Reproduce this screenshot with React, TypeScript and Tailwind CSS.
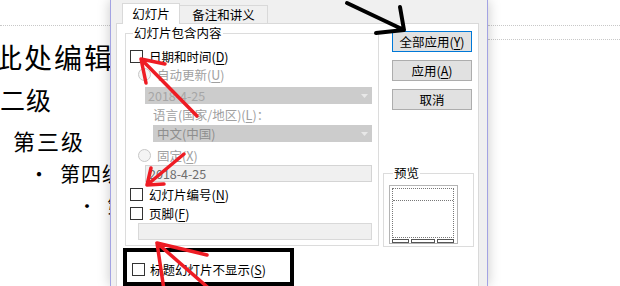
import React from 'react';

const Check = () => <span className="w-[13px] h-[13px] shrink-0 border border-[#333333] bg-white" />;
const Radio = () => <span className="w-[13px] h-[13px] shrink-0 rounded-full border border-[#c8c8c8] bg-[#f4f4f4]" />;

const Key = ({ k }: { k: string }) => (
  <span>
    (<span className="underline underline-offset-2">{k}</span>)
  </span>
);

const ComboArrow = () => (
  <svg width="7" height="4" viewBox="0 0 7 4" className="shrink-0">
    <path d="M0 0 L7 0 L3.5 4 Z" fill="#e8e8e8" />
  </svg>
);

const Annotations = () => (
  <svg className="absolute inset-0 z-20 pointer-events-none" width="620" height="286" viewBox="0 0 620 286">
    <g stroke="#ee1c24" strokeWidth="3.5" strokeLinecap="round" fill="none">
      <path d="M197 116 L141 59 M141 59 L146 83 M141 59 L165 64" />
      <path d="M184 154 L147 185 M147 185 L151 168 M147 185 L164 184" />
      <path d="M213 292 L157 243 M157 243 L164 290 M157 243 L207 255" />
    </g>
    <g stroke="#000" strokeWidth="4" strokeLinecap="round" fill="none">
      <path d="M347 3 L404 30 M404 30 L400 7 M404 30 L376 33" />
    </g>
  </svg>
);

const Dialog = () => (
  <div className="relative z-10 w-[378px] shrink-0 flex flex-col border-x border-[#a3a3e3] bg-[#f0f0f0] shadow-[0_0_12px_rgba(0,0,0,0.22)] text-[12.5px] leading-[14px]">
    {/* tab strip */}
    <div className="flex items-end pt-[3px] pl-[11px] -mb-px relative z-[1]">
      <div className="w-[58px] h-[21px] flex items-center justify-center bg-white border-x border-t border-[#d9d9d9]">幻灯片</div>
      <div className="w-[88px] h-[18px] mb-px flex items-center justify-center border-t border-r border-[#d9d9d9]">备注和讲义</div>
    </div>

    {/* tab panel */}
    <div className="ml-[5px] w-[363px] flex-1 flex items-start pl-[8px] bg-white border border-[#d9d9d9]">
      {/* left column */}
      <div className="w-[254px] shrink-0 flex flex-col">
        <fieldset className="mt-[2px] border border-[#dcdcdc] flex flex-col pb-[5px]">
          <legend className="ml-[7px] px-[1px] leading-[14px]">幻灯片包含内容</legend>

          <div className="mt-[10px] ml-[4px] h-[13px] flex items-center gap-[6px]">
            <Check />
            <span>日期和时间<Key k="D" /></span>
          </div>
          <div className="mt-[5px] ml-[12px] h-[13px] flex items-center gap-[6px] text-[#a0a0a0]">
            <Radio />
            <span>自动更新<Key k="U" /></span>
          </div>
          <div className="mt-[6px] ml-[19px] w-[227px] h-[17px] flex items-center justify-between pl-[3px] pr-[4px] bg-[#cccccc] text-[#a6a6a6]">
            <span>2018-4-25</span>
            <ComboArrow />
          </div>
          <div className="mt-[4px] ml-[27px] h-[14px] text-[#a0a0a0]">
            语言(国家/地区)<Key k="L" />：
          </div>
          <div className="mt-[3px] ml-[27px] w-[219px] h-[17px] flex items-center justify-between pl-[4px] pr-[4px] bg-[#cccccc] text-[#8e8e8e]">
            <span>中文(中国)</span>
            <ComboArrow />
          </div>
          <div className="mt-[7px] ml-[12px] h-[13px] flex items-center gap-[6px] text-[#a0a0a0]">
            <Radio />
            <span>固定<Key k="X" /></span>
          </div>
          <div className="mt-[3px] ml-[19px] w-[227px] h-[17px] flex items-center pl-[3px] bg-[#f0f0f0] border border-[#d4d4d4] text-[#6d6d6d]">
            2018-4-25
          </div>
          <div className="mt-[6px] ml-[4px] h-[13px] flex items-center gap-[6px]">
            <Check />
            <span>幻灯片编号<Key k="N" /></span>
          </div>
          <div className="mt-[6px] ml-[4px] h-[13px] flex items-center gap-[6px]">
            <Check />
            <span>页脚<Key k="F" /></span>
          </div>
          <div className="mt-[3px] ml-[12px] w-[234px] h-[17px] bg-[#f0f0f0] border border-[#d9d9d9]" />
        </fieldset>

        <div className="mt-[2px] -ml-[2px] w-[171px] h-[38px] border-[4px] border-black flex items-start pt-[11px] pl-[5px] gap-[5px]">
          <Check />
          <span className="leading-[13px]">标题幻灯片不显示<Key k="S" /></span>
        </div>
      </div>

      {/* right column */}
      <div className="ml-[4px] w-[91px] shrink-0 flex flex-col">
        <button className="mt-[7px] ml-[9px] w-[80px] h-[21px] flex items-center justify-center bg-[#e1e1e1] border border-[#0078d7]">
          全部应用<Key k="Y" />
        </button>
        <button className="mt-[8px] ml-[9px] w-[80px] h-[21px] flex items-center justify-center bg-[#e1e1e1] border border-[#adadad]">
          应用<Key k="A" />
        </button>
        <button className="mt-[8px] ml-[9px] w-[80px] h-[21px] flex items-center justify-center bg-[#e1e1e1] border border-[#adadad]">
          取消
        </button>

        <fieldset className="mt-[56px] border border-[#dcdcdc] pb-[2px]">
          <legend className="ml-[9px] px-[1px] leading-[14px]">预览</legend>
          <div className="mt-[5px] ml-[5px] w-[69px] flex flex-col pt-[2px] pl-[2px] bg-white border border-[#b4b4b4]">
            <div className="w-[62px] h-[50px] border border-dotted border-[#777777]">
              <div className="h-[12px] border-b border-dotted border-[#777777]" />
            </div>
            <div className="mt-px flex gap-[2px]">
              <span className="w-[17px] h-[4px] border border-[#555555]" />
              <span className="w-[24px] h-[4px] border border-[#555555]" />
              <span className="w-[17px] h-[4px] border border-[#555555]" />
            </div>
          </div>
        </fieldset>
      </div>
    </div>
  </div>
);

export default function App() {
  return (
    <div className="relative flex w-[620px] h-[286px] overflow-hidden bg-white text-black font-['Noto_Sans_CJK_SC',sans-serif]">
      {/* slide master text behind the dialog */}
      <div className="w-[110px] shrink-0 overflow-hidden whitespace-nowrap flex flex-col">
        <div className="h-[26px] shrink-0 border-b border-dotted border-[#c8c8c8]" />
        <div className="mt-[15px] -ml-[6px] h-[32px] text-[28px] leading-[32px] tracking-[2px]">此处编辑母版文本样式</div>
        <div className="mt-[11px] h-[30px] text-[25px] leading-[30px] tracking-[1px]">二级</div>
        <div className="mt-[12px] ml-[13px] h-[28px] text-[22px] leading-[28px] tracking-[2px]">第三级</div>
        <div className="mt-[7px] ml-[29px] h-[26px] flex items-center gap-[11px] text-[20px] leading-[26px]">
          <span>•</span>
          <span className="tracking-[1px]">第四级</span>
        </div>
        <div className="mt-[6px] ml-[78px] h-[24px] flex items-center gap-[11px] text-[18px] leading-[24px]">
          <span>•</span>
          <span>第五级</span>
        </div>
      </div>

      <Dialog />

      <div className="flex-1 flex flex-col">
        <div className="h-[26px] shrink-0 border-b border-dotted border-[#c8c8c8]" />
        <div className="h-[14px] shrink-0 border-b border-dotted border-[#c8c8c8]" />
      </div>

      <Annotations />
    </div>
  );
}
